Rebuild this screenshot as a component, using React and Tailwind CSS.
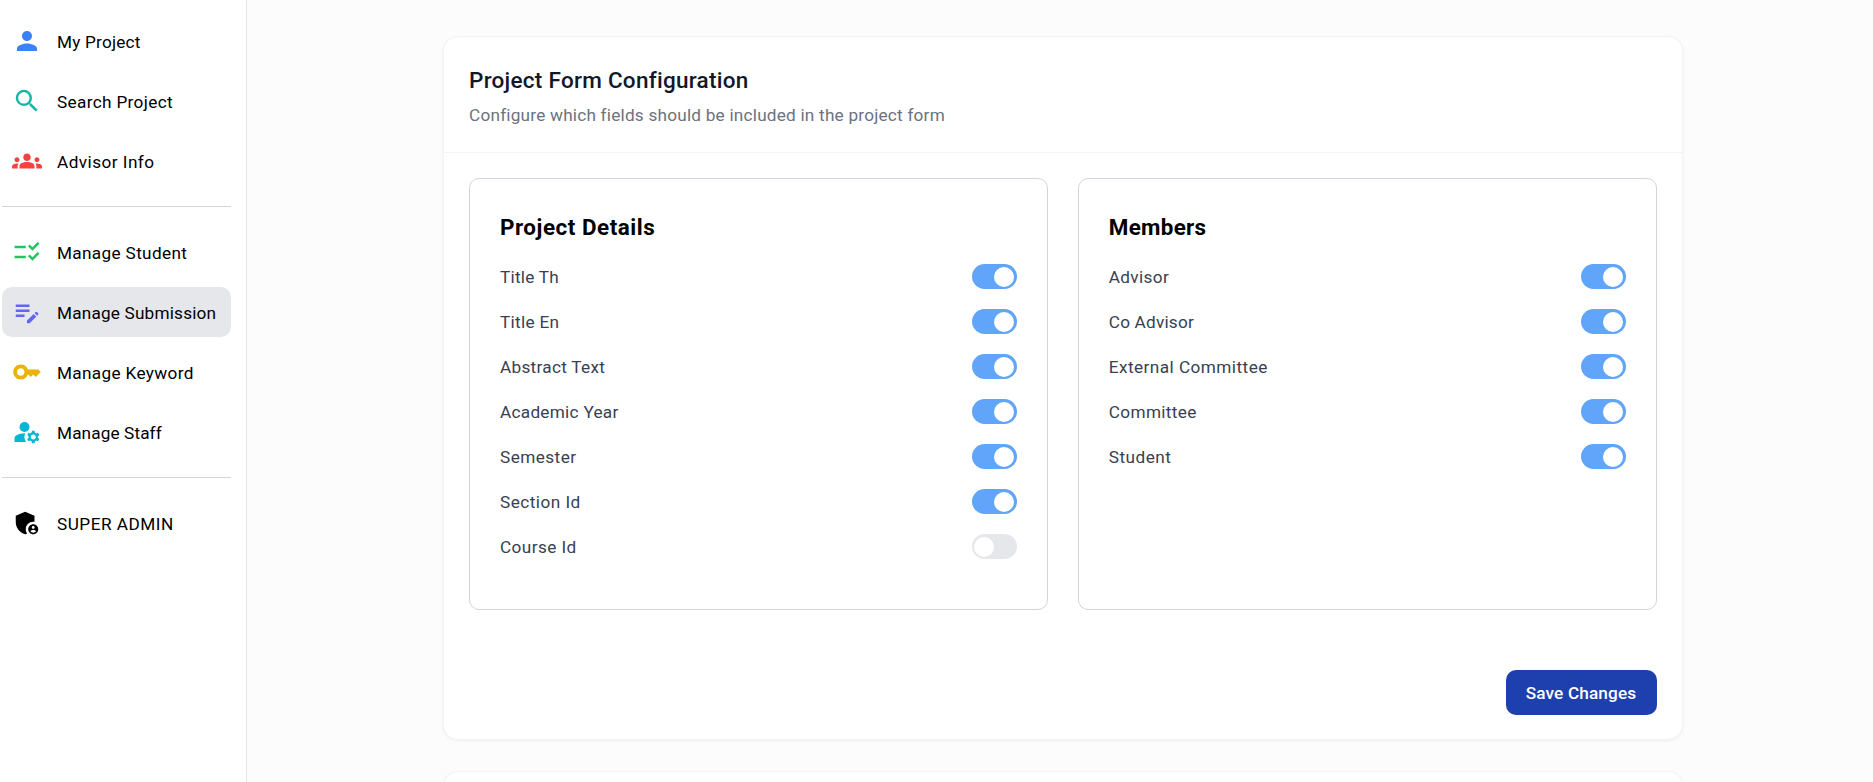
import { useState } from "react";
import {
  MdAdminPanelSettings,
  MdChecklistRtl,
  MdEditNote,
  MdGroups,
  MdKey,
  MdManageAccounts,
  MdPerson,
  MdSearch,
} from "react-icons/md";

const navGroups = [
  [
    { label: "My Project", Icon: MdPerson, color: "text-[#3b82f6]", tracking: "tracking-[0.2px]" },
    { label: "Search Project", Icon: MdSearch, color: "text-[#14b8a6]", tracking: "tracking-[0.34px]" },
    { label: "Advisor Info", Icon: MdGroups, color: "text-[#ef4444]", tracking: "tracking-[0.45px]" },
  ],
  [
    { label: "Manage Student", Icon: MdChecklistRtl, color: "text-[#22c55e]", tracking: "tracking-[0.34px]" },
    { label: "Manage Submission", Icon: MdEditNote, color: "text-[#6366f1]", tracking: "tracking-[0.19px]", active: true },
    { label: "Manage Keyword", Icon: MdKey, color: "text-[#eab308]", tracking: "tracking-[0.34px]" },
    { label: "Manage Staff", Icon: MdManageAccounts, color: "text-[#06b6d4]", tracking: "tracking-[0.12px]" },
  ],
  [{ label: "SUPER ADMIN", Icon: MdAdminPanelSettings, color: "text-black", tracking: "tracking-[0.5px]" }],
];

const detailFields = [
  { label: "Title Th", tracking: "tracking-[0.24px]", on: true },
  { label: "Title En", tracking: "tracking-[0.3px]", on: true },
  { label: "Abstract Text", tracking: "tracking-[0.29px]", on: true },
  { label: "Academic Year", tracking: "tracking-[0.28px]", on: true },
  { label: "Semester", tracking: "tracking-[0.44px]", on: true },
  { label: "Section Id", tracking: "tracking-[0.47px]", on: true },
  { label: "Course Id", tracking: "tracking-[0.42px]", on: false },
];

const memberFields = [
  { label: "Advisor", tracking: "tracking-[0.35px]", on: true },
  { label: "Co Advisor", tracking: "tracking-[0.2px]", on: true },
  { label: "External Committee", tracking: "tracking-[0.45px]", on: true },
  { label: "Committee", tracking: "tracking-[0.36px]", on: true },
  { label: "Student", tracking: "tracking-[0.5px]", on: true },
];

function NavItem({ label, Icon, color, tracking, active }) {
  return (
    <a
      className={`flex h-[50px] items-center gap-[15px] rounded-[10px] px-2.5 ${active ? "bg-gray-200" : ""}`}
    >
      <Icon className={`size-[30px] shrink-0 ${color}`} />
      <span className={`pt-0.5 text-[17.2px] leading-6 font-[450] whitespace-nowrap text-black ${tracking}`}>
        {label}
      </span>
    </a>
  );
}

function Sidebar() {
  return (
    <aside className="w-[247px] shrink-0 border-r border-gray-200 bg-white pt-4 pr-[15px] pl-0.5">
      {navGroups.map((group, i) => (
        <div key={i}>
          {i > 0 && <hr className="my-5 border-t border-[#d1d5db]" />}
          <nav className="flex flex-col gap-2.5">
            {group.map((item) => (
              <NavItem key={item.label} {...item} />
            ))}
          </nav>
        </div>
      ))}
    </aside>
  );
}

function Toggle({ initial, label }) {
  const [on, setOn] = useState(initial);
  return (
    <button
      type="button"
      role="switch"
      aria-checked={on}
      aria-label={label}
      onClick={() => setOn(!on)}
      className={`flex h-[25px] w-[45px] items-center rounded-full pt-px ${
        on ? "justify-end bg-[#60a5fa] pr-[3px]" : "justify-start bg-gray-200 pl-0.5"
      }`}
    >
      <span className="size-5 rounded-full bg-white" />
    </button>
  );
}

function FieldPanel({ title, titleTracking, fields }) {
  return (
    <section className="flex-1 rounded-[10px] border border-[#d1d5db] px-[30px] pt-[30px] pb-[50px]">
      <h3 className={`text-[22.4px] leading-[36px] font-bold text-black ${titleTracking}`}>{title}</h3>
      <div className="mt-[19px] flex flex-col gap-5">
        {fields.map((f) => (
          <div key={f.label} className="flex h-[25px] items-center justify-between">
            <span className={`text-[17.2px] leading-6 text-[#374151] ${f.tracking}`}>{f.label}</span>
            <Toggle initial={f.on} label={f.label} />
          </div>
        ))}
      </div>
    </section>
  );
}

export default function App() {
  return (
    <div className="flex h-screen overflow-hidden bg-[#fcfcfc] font-['Roboto',sans-serif]">
      <Sidebar />
      <main className="flex min-w-0 flex-1 flex-col gap-[31px] pt-9 pl-[196px]">
        <div className="w-[1239.5px] shrink-0 rounded-[15px] border border-gray-100 bg-white shadow-[0_1px_3px_rgba(0,0,0,0.06)]">
          <header className="border-b border-gray-100 px-[25px] pt-[26px] pb-6">
            <h2 className="text-[22.5px] leading-[35px] font-medium tracking-[0.27px] text-[#111827]">
              Project Form Configuration
            </h2>
            <p className="mt-1 text-[17.2px] leading-[26px] tracking-[0.22px] text-[#6b7280]">
              Configure which fields should be included in the project form
            </p>
          </header>
          <div className="px-[25px] pt-[25px] pb-6">
            <div className="flex gap-[30px]">
              <FieldPanel title="Project Details" titleTracking="tracking-[0.54px]" fields={detailFields} />
              <FieldPanel title="Members" titleTracking="tracking-[0.3px]" fields={memberFields} />
            </div>
            <div className="mt-[60px] flex justify-end">
              <button
                type="button"
                className="h-[45px] w-[151px] rounded-[10px] bg-[#1e40af] pt-0.5 text-[17.2px] font-medium tracking-[0.14px] text-white"
              >
                Save Changes
              </button>
            </div>
          </div>
        </div>
        <div className="h-60 w-[1239.5px] shrink-0 rounded-[15px] border border-gray-100 bg-white shadow-[0_1px_3px_rgba(0,0,0,0.06)]" />
      </main>
    </div>
  );
}
